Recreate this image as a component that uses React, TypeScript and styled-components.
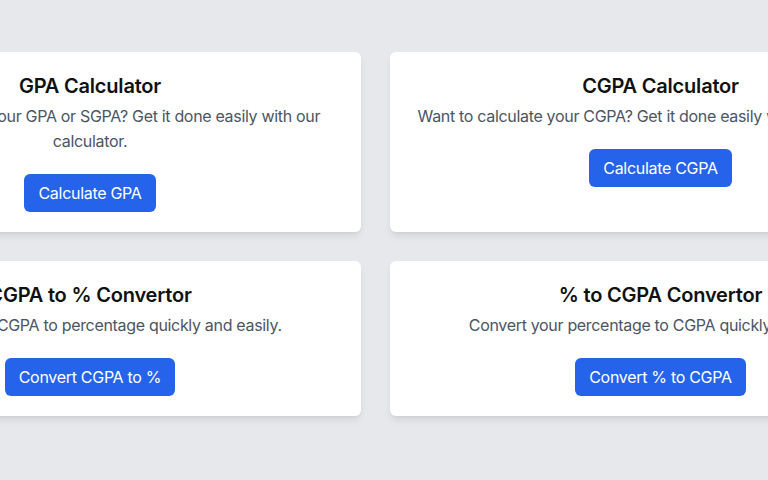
import * as React from 'react';
import styled, { createGlobalStyle } from 'styled-components';

const GlobalStyle = createGlobalStyle`
	html, body {
		margin: 0;
		padding: 0;
		background: #e7e8eb;
		overflow: hidden;
	}
	body {
		font-family: Inter, "Noto Sans", Arial, sans-serif;
		-webkit-font-smoothing: antialiased;
	}
`;

const StyledPage = styled.main`
	min-height: 480px;
	box-sizing: border-box;
	padding-top: 52px;
`;

const StyledGrid = styled.div`
	display: grid;
	grid-template-columns: 542px 541px;
	column-gap: 29px;
	row-gap: 29px;
	width: 1112px;
	margin-left: -181px;
`;

const StyledCard = styled.section`
	display: flex;
	flex-direction: column;
	align-items: center;
	box-sizing: border-box;
	padding: 20px;
	background-color: #ffffff;
	border-radius: 6px;
	box-shadow: 0 5px 8px -2px rgba(0, 0, 0, 0.1), 0 2px 4px -2px rgba(0, 0, 0, 0.06);
	text-align: center;
`;

const StyledTitle = styled.h2`
	margin: 0 0 4px;
	font-size: 20px;
	line-height: 28px;
	font-weight: 600;
	letter-spacing: -0.2px;
	color: #111111;
`;

const StyledDescription = styled.p`
	margin: 0 0 20px;
	font-size: 16px;
	line-height: 25px;
	letter-spacing: -0.32px;
	color: #4b5563;
`;

const StyledButton = styled.button`
	height: 38px;
	padding: 0 14px;
	border: none;
	border-radius: 6px;
	background-color: #2563eb;
	color: #ffffff;
	font-family: inherit;
	font-size: 16px;
	letter-spacing: -0.3px;
	cursor: pointer;
`;

interface ToolCardProps {
	title: string;
	description: string;
	action: string;
}

const ToolCard: React.FC<ToolCardProps> = props => (
	<StyledCard>
		<StyledTitle>{props.title}</StyledTitle>
		<StyledDescription>{props.description}</StyledDescription>
		<StyledButton>{props.action}</StyledButton>
	</StyledCard>
);

const tools: ToolCardProps[] = [
	{
		title: 'GPA Calculator',
		description: 'Want to calculate your GPA or SGPA? Get it done easily with our calculator.',
		action: 'Calculate GPA'
	},
	{
		title: 'CGPA Calculator',
		description: 'Want to calculate your CGPA? Get it done easily with our calculator.',
		action: 'Calculate CGPA'
	},
	{
		title: 'CGPA to % Convertor',
		description: 'Convert your CGPA to percentage quickly and easily.',
		action: 'Convert CGPA to %'
	},
	{
		title: '% to CGPA Convertor',
		description: 'Convert your percentage to CGPA quickly and easily.',
		action: 'Convert % to CGPA'
	}
];

export default function App() {
	return (
		<>
			<GlobalStyle />
			<StyledPage>
				<StyledGrid>
					{tools.map(tool => (
						<ToolCard key={tool.title} {...tool} />
					))}
				</StyledGrid>
			</StyledPage>
		</>
	);
}
